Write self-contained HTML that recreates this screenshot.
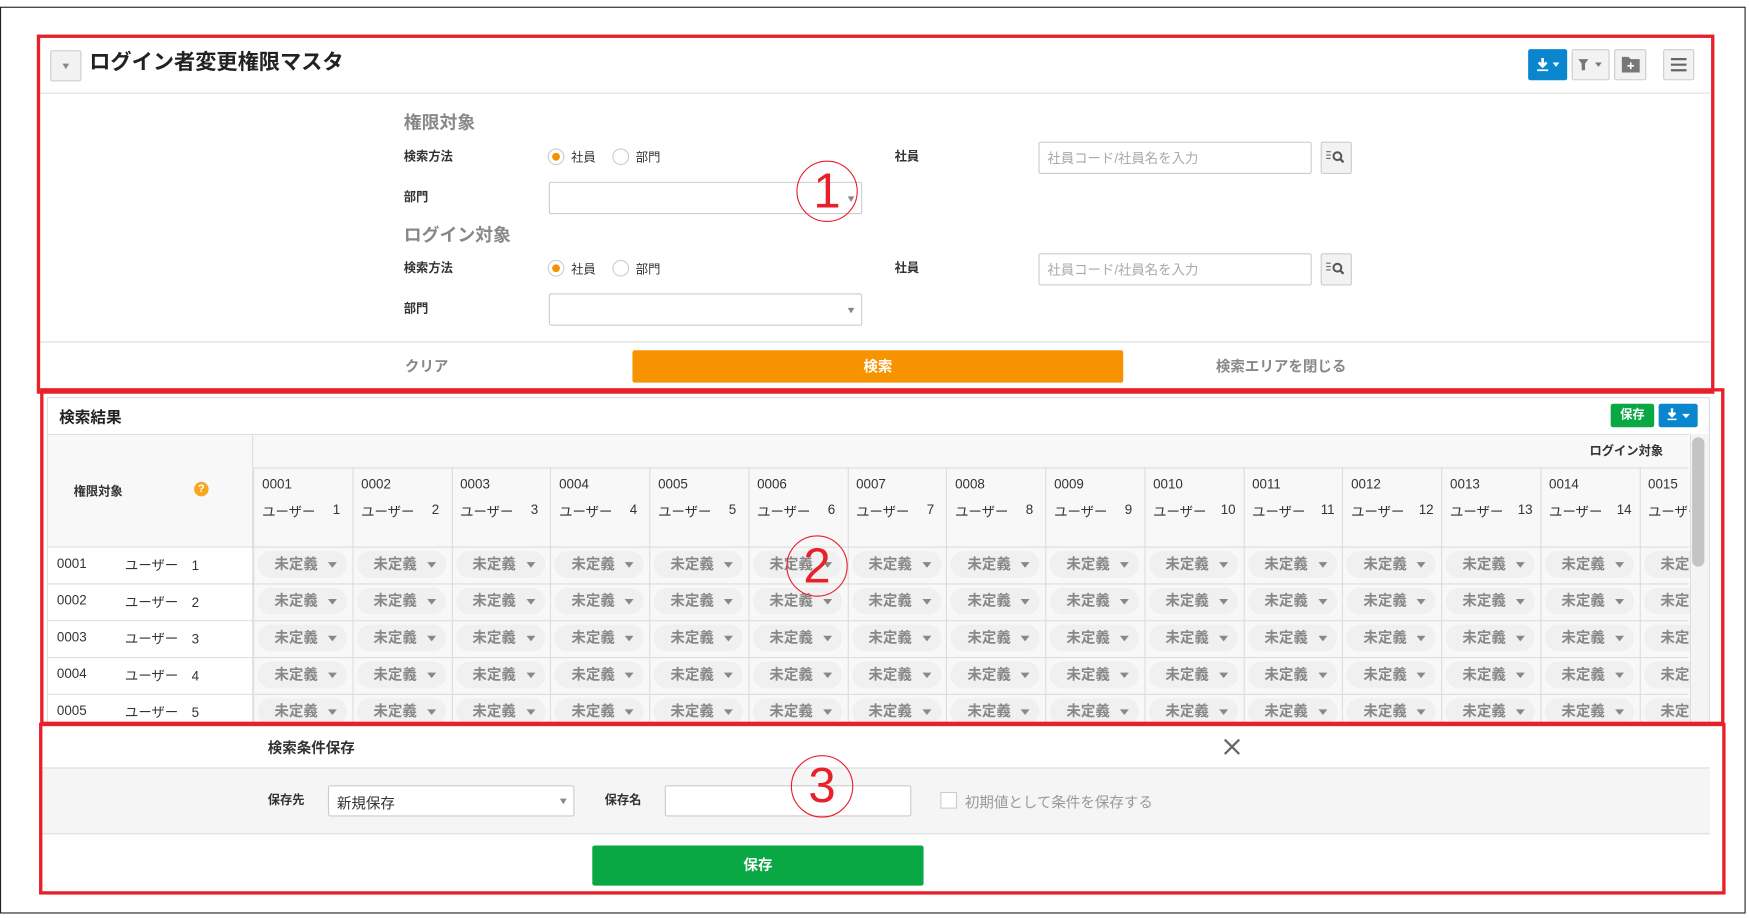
<!DOCTYPE html>
<html><head><meta charset="utf-8">
<style>
*{box-sizing:border-box;margin:0;padding:0}
html,body{width:1749px;height:918px;overflow:hidden;background:#fff}
body{font-family:"Liberation Sans","Noto Sans CJK JP",sans-serif;color:#333}
#w{position:absolute;left:0;top:0;width:1568px;height:823px;transform:scale(1.11543);transform-origin:0 0}
.a{position:absolute}
.red{position:absolute;border:3px solid #e8202a}
.lbl{position:absolute;font-size:11px;font-weight:bold;color:#333;line-height:14px}
.sec{position:absolute;font-size:16px;font-weight:bold;color:#888}
.inp{position:absolute;border:1px solid #ccc;border-radius:2px;background:#fff}
.ph{font-size:12px;color:#aaa;padding:5px 7px}
.sb{position:absolute;border:1px solid #ccc;background:#f2f2f2;border-radius:2px}
.caret{position:absolute;width:0;height:0;border-left:3px solid transparent;border-right:3px solid transparent;border-top:5px solid #888}
.radio{position:absolute;width:15px;height:15px;border:1px solid #ccc;border-radius:50%;background:#fff}
.radio.on::after{content:"";position:absolute;left:3px;top:3px;width:7px;height:7px;border-radius:50%;background:#f39200}
.rt{position:absolute;font-size:11px;color:#333}
.ib{position:absolute;height:28px;border:1px solid #ccc;background:#f2f2f2;border-radius:2px}
.pill{position:absolute;height:24px;border-radius:12px;background:#f0f0f0;font-size:13px;font-weight:bold;color:#888;line-height:24px;padding-left:15px;width:80px}
.pill i{position:absolute;right:9px;top:10px;border-left:4px solid transparent;border-right:4px solid transparent;border-top:5px solid #888}
.num{position:absolute;border:1.5px solid #e8202a;border-radius:50%;color:#e8202a;font-size:44px;text-align:center;font-family:"Liberation Sans",sans-serif;font-weight:300}
</style></head><body>
<div id="w">
<div class="a" style="left:0;top:6px;width:1565px;height:813px;border:1.5px solid #222"></div>

<div class="sb" style="left:45px;top:45px;width:28px;height:28px"></div>
<div class="caret" style="left:56px;top:57px"></div>
<div class="a" style="left:80px;top:44px;font-size:19px;font-weight:bold;color:#222;line-height:26px">ログイン者変更権限マスタ</div>
<div class="ib" style="left:1370px;top:44px;width:35px;background:#0a86cf;border-color:#0a86cf"></div>
<svg class="a" style="left:1376px;top:51px" width="24" height="14"><path d="M7 1v7M3.5 5l3.5 3.5 3.5-3.5" stroke="#fff" stroke-width="2.4" fill="none"/><path d="M2 12h10" stroke="#fff" stroke-width="1.5"/><path d="M16 5h6l-3 4z" fill="#fff"/></svg>
<div class="ib" style="left:1409px;top:44px;width:34px"></div>
<svg class="a" style="left:1413px;top:51px" width="26" height="14"><path d="M2 2h9l-3 4v6h-3v-6z" fill="#777"/><path d="M17 5h6l-3 4z" fill="#777"/></svg>
<div class="ib" style="left:1447px;top:44px;width:29px"></div>
<svg class="a" style="left:1453px;top:50px" width="18" height="16"><path d="M1 1h6l2 2h8v12H1z" fill="#777"/><path d="M9 6v6M6 9h6" stroke="#fff" stroke-width="1.5"/></svg>
<div class="ib" style="left:1491px;top:44px;width:28px"></div>
<svg class="a" style="left:1497px;top:51px" width="16" height="14"><path d="M1 2h14M1 7h14M1 12h14" stroke="#666" stroke-width="2"/></svg>
<div class="a" style="left:36px;top:83px;width:1497px;height:1px;background:#ddd"></div>

<div class="sec" style="left:362px;top:96px">権限対象</div>
<div class="lbl" style="left:362px;top:134px">検索方法</div>
<div class="radio on" style="left:491px;top:133px"></div><div class="rt" style="left:512px;top:133px">社員</div>
<div class="radio" style="left:549px;top:133px"></div><div class="rt" style="left:570px;top:133px">部門</div>
<div class="lbl" style="left:802px;top:134px">社員</div>
<div class="inp ph" style="left:931px;top:127px;width:245px;height:29px">社員コード/社員名を入力</div>
<div class="sb" style="left:1184px;top:127px;width:28px;height:29px"></div>
<svg class="a" style="left:1188px;top:134px" width="20" height="14"><path d="M1 2h4M1 5h4M1 8h4" stroke="#666"/><circle cx="11" cy="6" r="3.5" stroke="#555" stroke-width="1.8" fill="none"/><path d="M13.5 8.5l3 3" stroke="#555" stroke-width="2"/></svg>
<div class="lbl" style="left:362px;top:170px">部門</div>
<div class="inp" style="left:492px;top:163px;width:281px;height:29px"></div>
<div class="caret" style="left:760px;top:176px"></div>

<div class="sec" style="left:362px;top:197px">ログイン対象</div>
<div class="lbl" style="left:362px;top:234px">検索方法</div>
<div class="radio on" style="left:491px;top:233px"></div><div class="rt" style="left:512px;top:233px">社員</div>
<div class="radio" style="left:549px;top:233px"></div><div class="rt" style="left:570px;top:233px">部門</div>
<div class="lbl" style="left:802px;top:234px">社員</div>
<div class="inp ph" style="left:931px;top:227px;width:245px;height:29px">社員コード/社員名を入力</div>
<div class="sb" style="left:1184px;top:227px;width:28px;height:29px"></div>
<svg class="a" style="left:1188px;top:234px" width="20" height="14"><path d="M1 2h4M1 5h4M1 8h4" stroke="#666"/><circle cx="11" cy="6" r="3.5" stroke="#555" stroke-width="1.8" fill="none"/><path d="M13.5 8.5l3 3" stroke="#555" stroke-width="2"/></svg>
<div class="lbl" style="left:362px;top:270px">部門</div>
<div class="inp" style="left:492px;top:263px;width:281px;height:29px"></div>
<div class="caret" style="left:760px;top:276px"></div>

<div class="a" style="left:36px;top:306px;width:1497px;height:1px;background:#ddd"></div>
<div class="a" style="left:363px;top:318px;font-size:13px;font-weight:bold;color:#888">クリア</div>
<div class="a" style="left:567px;top:314px;width:440px;height:29px;background:#f79200;border-radius:2px;color:#fff;font-size:13px;font-weight:bold;text-align:center;line-height:29px">検索</div>
<div class="a" style="left:1090px;top:318px;font-size:13px;font-weight:bold;color:#888">検索エリアを閉じる</div>

<div class="a" style="left:42px;top:356px;width:1491px;height:293px;border:1px solid #ddd;background:#fff;overflow:hidden">
 <div class="a" style="left:10px;top:7px;font-size:14px;font-weight:bold;color:#222">検索結果</div>
 <div class="a" style="left:1401px;top:5px;width:39px;height:21px;background:#0aa844;border-radius:2px;color:#fff;font-size:11px;font-weight:bold;text-align:center;line-height:21px">保存</div>
 <div class="a" style="left:1444px;top:5px;width:35px;height:21px;background:#0a86cf;border-radius:2px"></div>
 <svg class="a" style="left:1450px;top:9px" width="26" height="13"><path d="M6 0v6M3 4l3 3 3-3" stroke="#fff" stroke-width="2.2" fill="none"/><path d="M2 10h8" stroke="#fff" stroke-width="1.4"/><path d="M15 5h7l-3.5 4z" fill="#fff"/></svg>
 <div class="a" style="left:0;top:32px;width:1471px;height:260px;background:#f8f8f8;border-top:1px solid #ddd"></div>
 <div class="a" style="left:183px;top:32px;width:1px;height:260px;background:#ddd"></div>
 <div class="a" style="left:184px;top:62px;width:1287px;height:1px;background:#ddd"></div>
 <div class="a" style="left:1382px;top:39px;font-size:11px;font-weight:bold;color:#333">ログイン対象</div>
 <div class="a" style="left:23px;top:75px;font-size:11px;font-weight:bold;color:#333">権限対象</div>
 <div class="a" style="left:131px;top:75px;width:13px;height:13px;border-radius:50%;background:#f5a623;color:#fff;font-size:10px;font-weight:bold;text-align:center;line-height:13px">?</div>
 <div id="grid"></div>
 <div class="a" style="left:1472px;top:32px;width:19px;height:260px;background:#f4f4f4;border-left:1px solid #ddd"></div>
 <div class="a" style="left:1474px;top:35px;width:11px;height:116px;background:#c4c4c4;border-radius:6px"></div>
</div>

<div class="a" style="left:240px;top:660px;font-size:13px;font-weight:bold;color:#333">検索条件保存</div>
<svg class="a" style="left:1097px;top:662px" width="15" height="15"><path d="M1 1l13 13M14 1L1 14" stroke="#666" stroke-width="2"/></svg>
<div class="a" style="left:38px;top:688px;width:1495px;height:60px;background:#f5f5f5;border-top:1px solid #ddd;border-bottom:1px solid #ddd"></div>
<div class="lbl" style="left:240px;top:711px">保存先</div>
<div class="inp" style="left:294px;top:704px;width:221px;height:28px;font-size:13px;color:#333;padding:5px 7px">新規保存</div>
<div class="caret" style="left:502px;top:716px"></div>
<div class="lbl" style="left:542px;top:711px">保存名</div>
<div class="inp" style="left:596px;top:704px;width:221px;height:28px"></div>
<div class="a" style="left:843px;top:710px;width:15px;height:15px;border:1px solid #ccc;background:#fff"></div>
<div class="a" style="left:865px;top:709px;font-size:13px;color:#999">初期値として条件を保存する</div>
<div class="a" style="left:531px;top:758px;width:297px;height:36px;background:#0aa844;border-radius:2px;color:#fff;font-size:13px;font-weight:bold;text-align:center;line-height:36px">保存</div>

<div class="red" style="left:33px;top:31px;width:1504px;height:322px"></div>
<div class="red" style="left:36px;top:348px;width:1510px;height:302px"></div>
<div class="red" style="left:35px;top:648px;width:1512px;height:154px"></div>

<div class="num" style="left:714px;top:144px;width:55px;height:55px;line-height:53px">1</div>
<div class="num" style="left:705px;top:480px;width:55px;height:55px;line-height:53px">2</div>
<div class="num" style="left:709px;top:677px;width:56px;height:56px;line-height:54px">3</div>
</div>
<script>
var g='',rows=['0001','0002','0003','0004','0005'];
for(var c=0;c<15;c++){var x=184+c*88.75;
 g+='<div class="a" style="left:'+x.toFixed(1)+'px;top:62px;width:1px;height:230px;background:#ddd"></div>';
 var n=('000'+(c+1)).slice(-4);
 g+='<div class="a" style="left:'+(x+8)+'px;top:70px;font-size:12px;color:#333">'+n+'</div>';
 g+='<div class="a" style="left:'+(x+8)+'px;top:93px;width:'+(c<9?70:74)+'px;font-size:12px;color:#333;white-space:nowrap">ユーザー<span style="position:absolute;right:0">'+(c+1)+'</span></div>';
 for(var r=0;r<5;r++){g+='<div class="pill" style="left:'+(x+4)+'px;top:'+(137+r*33)+'px">未定義<i></i></div>';}
}
for(var r=0;r<5;r++){var y=133+r*33;
 g+='<div class="a" style="left:0;top:'+y+'px;width:1471px;height:1px;background:#ddd"></div>';
 g+='<div class="a" style="left:0;top:'+(y+1)+'px;width:183px;height:32px;background:#fff"></div>';
 g+='<div class="a" style="left:8px;top:'+(y+8)+'px;font-size:12px;color:#333">'+rows[r]+'</div>';
 g+='<div class="a" style="left:69px;top:'+(y+8)+'px;font-size:12px;color:#333">ユーザー　'+(r+1)+'</div>';
}
document.getElementById('grid').innerHTML=g;
</script>
</body></html>
